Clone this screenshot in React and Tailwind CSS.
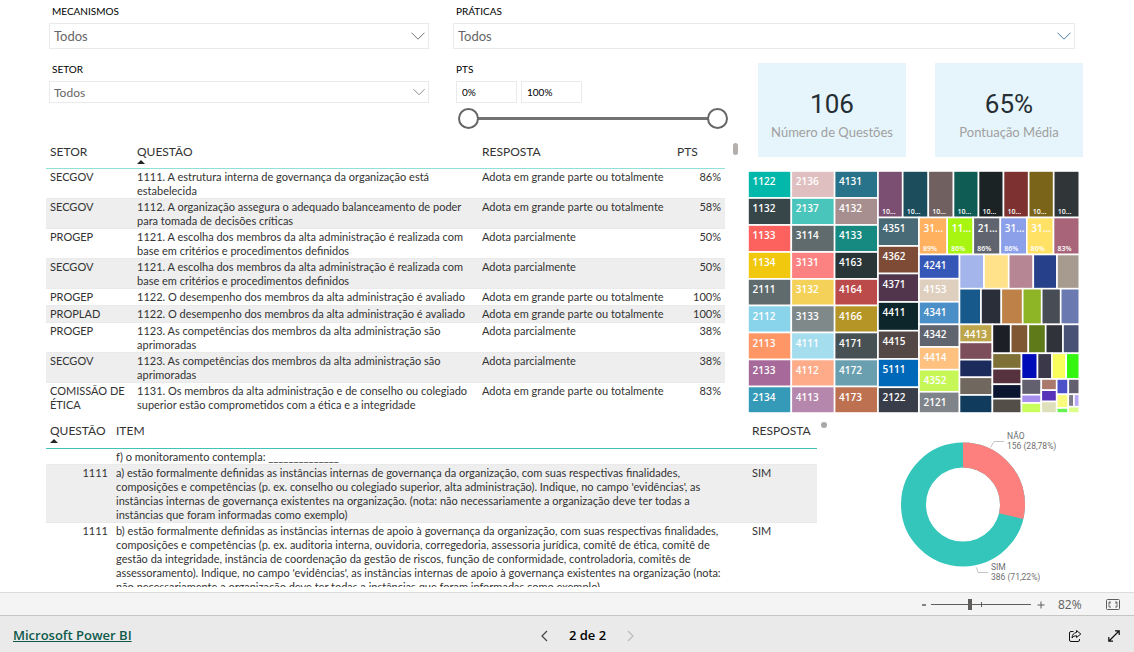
import React, { useState } from "react";

const QUESTIONS = [
  ["SECGOV", "1111. A estrutura interna de governança da organização está estabelecida", "Adota em grande parte ou totalmente", "86%"],
  ["SECGOV", "1112. A organização assegura o adequado balanceamento de poder para tomada de decisões críticas", "Adota em grande parte ou totalmente", "58%"],
  ["PROGEP", "1121. A escolha dos membros da alta administração é realizada com base em critérios e procedimentos definidos", "Adota parcialmente", "50%"],
  ["SECGOV", "1121. A escolha dos membros da alta administração é realizada com base em critérios e procedimentos definidos", "Adota parcialmente", "50%"],
  ["PROGEP", "1122. O desempenho dos membros da alta administração é avaliado", "Adota em grande parte ou totalmente", "100%"],
  ["PROPLAD", "1122. O desempenho dos membros da alta administração é avaliado", "Adota em grande parte ou totalmente", "100%"],
  ["PROGEP", "1123. As competências dos membros da alta administração são aprimoradas", "Adota parcialmente", "38%"],
  ["SECGOV", "1123. As competências dos membros da alta administração são aprimoradas", "Adota parcialmente", "38%"],
  ["COMISSÃO DE ÉTICA", "1131. Os membros da alta administração e de conselho ou colegiado superior estão comprometidos com a ética e a integridade", "Adota em grande parte ou totalmente", "83%"],
];

const ITEMS = [
  ["", "f) o monitoramento contempla: ______________", ""],
  ["1111", "a) estão formalmente definidas as instâncias internas de governança da organização, com suas respectivas finalidades, composições e competências (p. ex. conselho ou colegiado superior, alta administração). Indique, no campo 'evidências', as instâncias internas de governança existentes na organização. (nota: não necessariamente a organização deve ter todas a instâncias que foram informadas como exemplo)", "SIM"],
  ["1111", "b) estão formalmente definidas as instâncias internas de apoio à governança da organização, com suas respectivas finalidades, composições e competências (p. ex. auditoria interna, ouvidoria, corregedoria, assessoria jurídica, comitê de ética, comitê de gestão da integridade, instância de coordenação da gestão de riscos, função de conformidade, controladoria, comitês de assessoramento). Indique, no campo 'evidências', as instâncias internas de apoio à governança existentes na organização (nota: não necessariamente a organização deve ter todas a instâncias que foram informadas como exemplo)", "SIM"],
];

// Treemap tiles: [left, top, right, bottom, colour, label, value]
const row = (top, bottom, xs, cells) =>
  cells.map(([c, l, v], i) => [xs[i], top, xs[i + 1], bottom, c, l, v]);
const col = (left, right, ys, cells) =>
  cells.map(([c, l], i) => [left, ys[i], right, ys[i + 1], c, l]);

const NINE = [0, 27, 54, 81, 108, 134.5, 161.5, 188.5, 215.5, 242];
const TILES = [
  ...col(0, 43.3, NINE, [["#01b8aa", "1122"], ["#374649", "1132"], ["#fd625e", "1133"], ["#f2c80f", "1134"], ["#5f6b6d", "2111"], ["#8ad4eb", "2112"], ["#fe9666", "2113"], ["#a66999", "2133"], ["#3599b8", "2134"]]),
  ...col(43.3, 86.6, NINE, [["#dfbfbf", "2136"], ["#4ac5bb", "2137"], ["#5f6b6d", "3114"], ["#fb8281", "3131"], ["#f4d25a", "3132"], ["#7f898a", "3133"], ["#a4ddee", "4111"], ["#fdab89", "4112"], ["#b687ac", "4113"]]),
  ...col(86.6, 130, NINE, [["#28738a", "4131"], ["#a78f8f", "4132"], ["#168980", "4133"], ["#293537", "4163"], ["#bb4a4a", "4164"], ["#b59525", "4166"], ["#475052", "4171"], ["#6a9fb0", "4172"], ["#bd7150", "4173"]]),
  ...row(0, 46.5, [130, 154.7, 180.3, 205.5, 230.5, 255.5, 280.7, 305.7, 331.3], [["#7b4f71", "", "10…"], ["#1b4d5c", "", "10…"], ["#706060", "", "10…"], ["#0f5c55", "", "10…"], ["#1c2325", "", "10…"], ["#7d3231", "", "10…"], ["#796419", "", "10…"], ["#303637", "", "10…"]]),
  ...col(130, 171, [46.5, 75, 102.5, 131, 159.7, 188, 216.3, 242], [["#476a76", "4351"], ["#7e4b36", "4362"], ["#50354d", "4371"], ["#0d262c", "4411"], ["#544846", "4415"], ["#0068b8", "5111"], ["#383d49", "2122"]]),
  ...row(46.5, 83.5, [171, 199.2, 225.3, 252.3, 278.8, 305.5, 331.3], [["#ffb15f", "31…", "89%"], ["#a8f511", "11…", "86%"], ["#5f646f", "21…", "86%"], ["#8ca0e9", "31…", "86%"], ["#ffe165", "31…", "86%"], ["#a8657a", "", "83%"]]),
  ...col(171, 211.5, [83.5, 107.7, 130.8, 153.4, 176, 198.7, 220.8, 242], [["#3557b8", "4241"], ["#dfcfbf", "4153"], ["#4a8fc7", "4341"], ["#5f646f", "4342"], ["#fec17f", "4414"], ["#c6f757", "4352"], ["#7f848b", "2121"]]),
  ...row(83.5, 117.7, [211.5, 236, 260.7, 285.3, 309, 331.3], [["#a4b5eb"], ["#ffe28a"], ["#b78695"], ["#264089"], ["#a79b8f"]]),
  ...row(117.7, 153.4, [211.5, 233, 253.3, 274.7, 293.7, 312.7, 331.3], [["#17598b"], ["#292e38"], ["#be8248"], ["#8eb526"], ["#484d55"], ["#6a7ab0"]]),
  ...col(211.5, 244.4, [153.4, 171.4, 188.7, 206.3, 224, 242], [["#bda54c", "4413"], ["#7c4e5b"], ["#1b2b5c"], ["#70675f"], ["#103b5d"]]),
  ...row(153.4, 182.3, [244.4, 262.7, 280.3, 297.7, 315, 331.3], [["#1c1f26"], ["#7f5732"], ["#5e7a19"], ["#303339"], ["#475275"]]),
  ...col(244.4, 273.5, [182.3, 197.7, 213.3, 227.7, 242], [["#7e7036"], ["#55323e"], ["#0c152f"], ["#534e48"]]),
  ...row(182.3, 208, [273.5, 289.5, 304, 318.2, 331.3], [["#000cb8"], ["#3b384a"], ["#fafe5c"], ["#35f610"]]),
  ...col(273.5, 293.3, [208, 223.7, 232, 242], [["#625f6e"], ["#a58eec"], ["#c8ff5c"]]),
  ...col(293.3, 308.7, [208, 219.2, 230.5, 242], [["#a9796b"], ["#5633b8"], ["#dee0bc"]]),
  ...col(308.7, 320.3, [208, 223.3, 237, 242], [["#4c51c8"], ["#fafa7c"], ["#68f250"]]),
  [320.3, 208, 331.3, 223.3, "#625f6e"],
  [320.3, 223.3, 326, 235.7, "#7b7c86"],
  [326, 223.3, 331.3, 235.7, "#b8a7f2"],
  [320.3, 235.7, 331.3, 242, "#dcff8a"],
];

function Treemap() {
  return (
    <svg viewBox="0 0 332 242" className="block w-full font-['Open_Sans',sans-serif] font-semibold" role="img" aria-label="Questões por pontuação" fill="#fff">
      {TILES.map(([l, t, r, b, c, label, value], i) => (
        <g key={i}>
          <rect x={l} y={t} width={r - l} height={b - t} fill={c} stroke="#fff" strokeWidth="1.6" />
          {label && <text x={l + 4.5} y={t + 14} fontSize="10">{label}</text>}
          {value && <text x={l + 4} y={b - 4} fontSize="7">{value}</text>}
        </g>
      ))}
    </svg>
  );
}

function Donut() {
  return (
    <svg viewBox="0 0 200 165" className="block w-full font-['Roboto',sans-serif]" role="img" aria-label="Respostas: NÃO 156, SIM 386">
      <g fill="none" strokeWidth="25" transform="rotate(-90 80 81.5)">
        <circle cx="80" cy="81.5" r="49.5" stroke="#35c6bb" />
        <circle cx="80" cy="81.5" r="49.5" stroke="#fe807e" pathLength="100" strokeDasharray="28.78 71.22" />
      </g>
      <g fill="none" stroke="#c4c4c4">
        <path d="M107.500 24.500L111 18.500H121" />
        <path d="M93.500 144.500L95 149.500H105" />
      </g>
      <g fontSize="8.5" fill="#707070">
        <text x="124" y="16">NÃO</text>
        <text x="124" y="26">156 (28,78%)</text>
        <text x="108" y="147">SIM</text>
        <text x="108" y="157">386 (71,22%)</text>
      </g>
    </svg>
  );
}

function Dropdown({ id, label, large, blue }) {
  return (
    <div>
      <label htmlFor={id} className="block pl-[3px] text-[10px] leading-4 text-black">{label}</label>
      <div className={`relative mt-1 ${large ? "h-[26px] text-[13px]" : "h-[22px] text-[12px]"}`}>
        <select id={id} className="block h-full w-full appearance-none border border-[#eaeaea] bg-white pl-1 pr-6 pt-0.5 text-[#666] outline-none">
          <option>Todos</option>
        </select>
        <svg viewBox="0 0 14 8" className={`pointer-events-none absolute right-1 top-1/2 -translate-y-1/2 ${large ? "w-[14px]" : "w-[12px]"} ${blue ? "text-[#4a7fa5]" : "text-[#777]"}`} fill="none" stroke="currentColor">
          <path d="M.5 .7L7 7.200L13.500 .7" />
        </svg>
      </div>
    </div>
  );
}

function Header({ children, sorted }) {
  return (
    <>
      <span className="block leading-4">{children}</span>
      <svg viewBox="0 0 8 4" className="block h-1 w-2" aria-hidden="true">
        {sorted && <path d="M0 4L4 0L8 4Z" fill="#252423" />}
      </svg>
    </>
  );
}

function Card({ value, label }) {
  return (
    <div className="flex h-[94px] flex-1 flex-col items-center bg-[#e6f5fb] pt-[25px]">
      <span className="font-['Roboto',sans-serif] text-[26px] leading-8 text-[#252e33]">{value}</span>
      <span className="mt-[3px] text-[13px] leading-[18px] text-[#a0a0a0]">{label}</span>
    </div>
  );
}

const THUMB =
  "[grid-area:1/1] pointer-events-none h-[21px] w-full appearance-none bg-transparent [&::-webkit-slider-thumb]:pointer-events-auto [&::-webkit-slider-thumb]:size-[21px] [&::-webkit-slider-thumb]:appearance-none [&::-webkit-slider-thumb]:rounded-full [&::-webkit-slider-thumb]:border-2 [&::-webkit-slider-thumb]:border-[#666] [&::-webkit-slider-thumb]:bg-white";

function RangeFilter() {
  const [low, setLow] = useState(0);
  const [high, setHigh] = useState(100);
  const box = "h-[22px] w-[61px] border border-[#eaeaea] px-[5px] text-[10px] text-black outline-none";
  return (
    <fieldset className="min-w-0 pl-[3px]">
      <legend className="block text-[10px] leading-4 text-black">PTS</legend>
      <div className="mt-1 flex gap-1">
        <input aria-label="PTS mínimo" className={box} value={`${low}%`} onChange={(e) => setLow(parseInt(e.target.value, 10) || 0)} />
        <input aria-label="PTS máximo" className={box} value={`${high}%`} onChange={(e) => setHigh(parseInt(e.target.value, 10) || 0)} />
      </div>
      <div className="ml-0.5 mr-3 mt-[5px] grid items-center">
        <div className="mx-2 h-[3px] bg-[#737373] [grid-area:1/1]" />
        <input type="range" aria-label="Limite inferior" className={THUMB} value={low} onChange={(e) => setLow(+e.target.value)} />
        <input type="range" aria-label="Limite superior" className={THUMB} value={high} onChange={(e) => setHigh(+e.target.value)} />
      </div>
    </fieldset>
  );
}

export default function App() {
  return (
    <div className="flex h-screen flex-col overflow-hidden bg-white font-['Lato','Open_Sans',sans-serif] text-[#333]">
      <div className="grid grid-cols-[380fr_622fr] gap-6 pl-[49px] pr-[59px] pt-[3px]">
        <Dropdown id="mecanismos" label="MECANISMOS" large />
        <Dropdown id="praticas" label="PRÁTICAS" large blue />
      </div>

      <div className="flex gap-2 pl-[46px] pr-[51px]">
        <div className="min-w-0 flex-1 pt-3">
          <div className="grid grid-cols-[380fr_287fr] gap-6 pl-[3px]">
            <Dropdown id="setor" label="SETOR" />
            <RangeFilter />
          </div>
          <div className="mt-3 flex items-start gap-2">
            <table className="w-full table-fixed text-left text-[11px] leading-[14px]">
              <colgroup>
                <col className="w-[87px]" />
                <col />
                <col className="w-[195px]" />
                <col className="w-[52px]" />
              </colgroup>
              <thead>
                <tr className="h-[27px] align-top text-[12px] [&>th]:border-b [&>th]:border-[#8fe0d6] [&>th]:px-1 [&>th]:pt-[3px] [&>th]:font-normal">
                  <th scope="col"><Header>SETOR</Header></th>
                  <th scope="col" aria-sort="ascending"><Header sorted>QUESTÃO</Header></th>
                  <th scope="col"><Header>RESPOSTA</Header></th>
                  <th scope="col"><Header>PTS</Header></th>
                </tr>
              </thead>
              <tbody>
                {QUESTIONS.map((q, i) => (
                  <tr key={i} className="h-[17px] align-top even:bg-[#eeeeee] [&>td]:border-b [&>td]:border-[#eaeaea] last:[&>td]:border-white [&>td]:px-1 [&>td]:pt-px">
                    <td>{q[0]}</td>
                    <td>{q[1]}</td>
                    <td className="whitespace-nowrap">{q[2]}</td>
                    <td className="text-right">{q[3]}</td>
                  </tr>
                ))}
              </tbody>
            </table>
            <div className="mr-0.5 mt-0.5 h-3 w-[5px] shrink-0 rounded-full bg-[#b3b0ad]" />
          </div>
        </div>

        <div className="w-[335px] shrink-0 pt-[14px]">
          <div className="flex gap-[29px] pl-[10px]">
            <Card value="106" label="Número de Questões" />
            <Card value="65%" label="Pontuação Média" />
          </div>
          <div className="mt-[14px] pr-[3px]">
            <Treemap />
          </div>
        </div>
      </div>

      <div className="mb-[5px] mt-px flex min-h-0 flex-1 items-start overflow-hidden pl-[46px] pr-[51px]">
        <table className="min-w-0 flex-1 table-fixed text-left text-[11px] leading-[14px]">
          <colgroup>
            <col className="w-[66px]" />
            <col />
            <col className="w-[69px]" />
          </colgroup>
          <thead>
            <tr className="h-[34px] align-top text-[12px] [&>th]:border-b [&>th]:border-[#3fc4b7] [&>th]:px-1 [&>th]:pt-[9px] [&>th]:font-normal">
              <th scope="col" aria-sort="ascending"><Header sorted>QUESTÃO</Header></th>
              <th scope="col"><Header>ITEM</Header></th>
              <th scope="col"><Header>RESPOSTA</Header></th>
            </tr>
          </thead>
          <tbody>
            {ITEMS.map((r, i) => (
              <tr key={i} className="align-top even:bg-[#eeeeee] [&>td]:border-b [&>td]:border-[#eaeaea] [&>td]:pl-1 [&>td]:pt-px">
                <td className="pr-1 text-right">{r[0]}</td>
                <td className="pr-3">{r[1]}</td>
                <td className="pr-1">{r[2]}</td>
              </tr>
            ))}
          </tbody>
        </table>
        <div className="ml-1 mt-2 size-1.5 shrink-0 rounded-full bg-[#a8a8a8]" />
        <div className="ml-14 mt-[9px] w-[200px] shrink-0">
          <Donut />
        </div>
      </div>

      <div className="flex h-[23px] shrink-0 items-center justify-end border-t border-[#dcdcdc] bg-[#f4f4f4] pr-[14px] pt-px text-[12px] text-[#605e5c]">
        <button type="button" aria-label="Reduzir" className="flex size-3 items-center justify-center">
          <svg viewBox="0 0 8 8" className="size-2" stroke="currentColor" strokeWidth="1.500"><path d="M2 4H6" /></svg>
        </button>
        <div className="grid w-[102px] items-center">
          <div className="mx-px h-px bg-[#605e5c] [grid-area:1/1]" />
          <div className="mx-auto h-[5px] w-px bg-[#605e5c] [grid-area:1/1]" />
          <input type="range" aria-label="Zoom" defaultValue="39" className="h-3 w-full appearance-none bg-transparent [grid-area:1/1] [&::-webkit-slider-thumb]:h-[11px] [&::-webkit-slider-thumb]:w-1 [&::-webkit-slider-thumb]:appearance-none [&::-webkit-slider-thumb]:bg-[#605e5c]" />
        </div>
        <button type="button" aria-label="Ampliar" className="ml-[3px] flex size-3 items-center justify-center">
          <svg viewBox="0 0 8 8" className="size-2" stroke="currentColor"><path d="M.5 4H7.500M4 .5V7.500" /></svg>
        </button>
        <span className="ml-[11px] w-12 font-['Open_Sans',sans-serif]">82%</span>
        <button type="button" aria-label="Ajustar à página">
          <svg viewBox="0 0 14 11" className="block w-[14px]" fill="none" stroke="currentColor">
            <rect x=".5" y=".5" width="13" height="10" rx="1" />
            <path d="M5 3H3V8H5M3 3L4.500 4.500M9 3H11V8H9M11 3L9.500 4.500" strokeWidth=".9" />
          </svg>
        </button>
      </div>

      <footer className="grid h-[37px] shrink-0 grid-cols-[1fr_auto_1fr] items-center border-t border-[#c6c6c6] bg-[#eaeaea] pl-[13px] pr-[14px] pt-1 font-['Open_Sans',sans-serif] text-[13px] font-semibold">
        <a href="#powerbi" className="justify-self-start text-[#0d5a4c] underline">Microsoft Power BI</a>
        <div className="flex items-center gap-[21px] pl-[42px] text-black">
          <button type="button" aria-label="Página anterior">
            <svg viewBox="0 0 7 12" className="block w-[7px]" fill="none" stroke="#444" strokeWidth="1.200"><path d="M6 1L1 6L6 11" /></svg>
          </button>
          <span>2 de 2</span>
          <button type="button" aria-label="Próxima página" disabled>
            <svg viewBox="0 0 7 12" className="block w-[7px]" fill="none" stroke="#bbb" strokeWidth="1.200"><path d="M1 1L6 6L1 11" /></svg>
          </button>
        </div>
        <div className="flex items-center gap-[26px] justify-self-end text-[#111]">
          <button type="button" aria-label="Compartilhar">
            <svg viewBox="0 0 14 14" className="block size-[14px]" fill="none" stroke="currentColor" strokeLinejoin="round">
              <path d="M5.500 2.500H3Q1.500 2.500 1.500 4V11Q1.500 12.500 3 12.500H10Q11.500 12.500 11.500 11V10" />
              <path d="M8.500 1.500L12.800 5L8.500 8.500V6.700Q5.500 6.500 4 9Q4.300 4 8.500 3.500Z" />
            </svg>
          </button>
          <button type="button" aria-label="Tela inteira">
            <svg viewBox="0 0 12 12" className="block size-3" fill="none" stroke="currentColor" strokeWidth="1.200">
              <path d="M1 11L11 1M7 .8H11.200V5M.8 7V11.200H5" />
            </svg>
          </button>
        </div>
      </footer>
    </div>
  );
}
